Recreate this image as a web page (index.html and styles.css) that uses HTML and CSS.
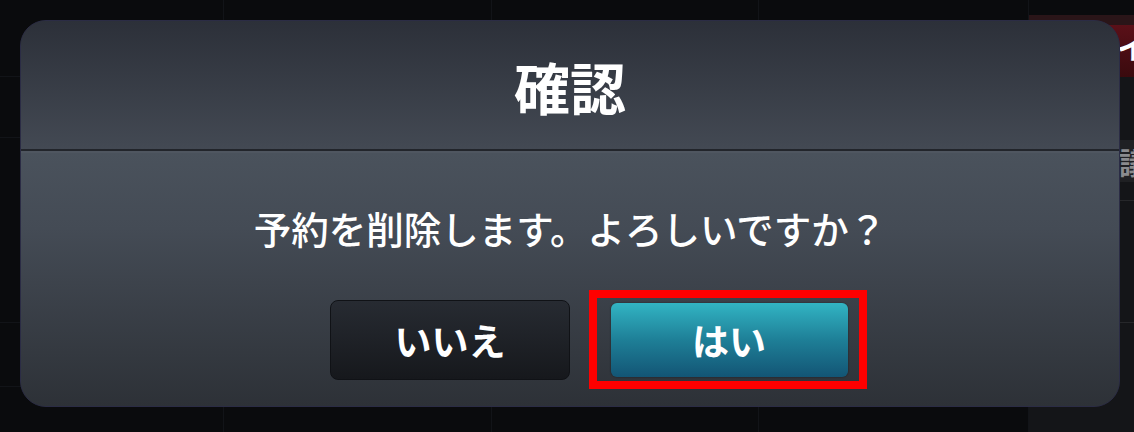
FILE: index.html
```html
<!DOCTYPE html>
<html lang="ja">
<head>
<meta charset="UTF-8">
<meta name="viewport" content="width=device-width, initial-scale=1.0">
<title>確認</title>
<link rel="stylesheet" href="styles.css">
</head>
<body>
    <div class="screen">
        <!-- 뒤에 깔린 화면 -->
        <div class="backdrop">
            <div class="board"></div>
            <div class="side">
                <div class="side-top"></div>
                <div class="side-head">イ</div>
                <div class="side-gap"></div>
                <div class="side-label">議</div>
                <div class="side-rest"></div>
            </div>
        </div>

        <!-- 확인 다이얼로그 -->
        <div class="dialog">
            <div class="dialog-head">
                <h1 class="dialog-title">確認</h1>
            </div>
            <div class="dialog-body">
                <p class="dialog-msg">予約を削除します。よろしいですか？</p>
                <div class="dialog-btns">
                    <button class="btn btn-no">いいえ</button>
                    <div class="focus">
                        <button class="btn btn-yes">はい</button>
                    </div>
                </div>
            </div>
        </div>
    </div>
</body>
</html>
```

FILE: styles.css
```css
*{
    box-sizing: border-box;
}
body{
    margin:0;
    background:#0a0b0d;
    font-family: "Noto Sans CJK JP", "Noto Sans", sans-serif;
}
.screen{
    position: relative;
    width:1134px;
    height:432px;
    overflow: hidden;
}
.backdrop{
    display: flex;
    height:100%;
}
.board{
    flex:1;
    background:
        linear-gradient(#121418,#121418) 223px 0/1px 100% no-repeat,
        linear-gradient(#121418,#121418) 491px 0/1px 100% no-repeat,
        linear-gradient(#121418,#121418) 758px 0/1px 100% no-repeat,
        linear-gradient(#121418,#121418) 0 76px/100% 1px no-repeat,
        linear-gradient(#121418,#121418) 0 137px/100% 1px no-repeat,
        linear-gradient(#121418,#121418) 0 322px/100% 1px no-repeat,
        linear-gradient(#121418,#121418) 0 386px/100% 1px no-repeat,
        #0a0b0d;
}
.side{
    width:106px;
    display: flex;
    flex-direction: column;
    border-left:1px solid #121418;
    overflow: hidden;
    white-space: nowrap;
}
.side-top{
    height:15px;
}
.side-head{
    height:62px;
    padding:10px 0 0 88px;
    background: linear-gradient(#2a1518 0, #2a1518 10px, #5a1018 10px, #3a0a0e);
    color:#fff;
    font-size:30px;
    font-weight: bold;
    line-height:42px;
}
.side-gap{
    height:63px;
    background:#141518;
}
.side-label{
    height:42px;
    padding-left:90px;
    background:#1f2023;
    color:#8a8b8e;
    font-size:30px;
    font-weight: bold;
    line-height:42px;
}
.side-rest{
    flex:1;
    background:
        linear-gradient(#26272a,#26272a) 0 18px/100% 1px no-repeat,
        linear-gradient(#26272a,#26272a) 0 140px/100% 1px no-repeat,
        #141518;
}

.dialog{
    position: absolute;
    top:20px;
    left:20px;
    width:1100px;
    height:387px;
    border:1px solid #2b2c45;
    border-radius:26px;
    overflow: hidden;
    display: flex;
    flex-direction: column;
    background:#2e3238;
}
.dialog-head{
    height:130px;
    display: flex;
    align-items: center;
    justify-content: center;
    background: linear-gradient(#2c3039, #434953);
    border-bottom:2px solid #22252b;
}
.dialog-title{
    margin:0;
    color:#fff;
    font-size:56px;
    font-weight: bold;
    line-height:1;
    padding-top:2px;
}
.dialog-body{
    flex:1;
    border-top:2px solid #4f5660;
    background: linear-gradient(#4a525c, #444b55 30%, #2d3137);
    display: flex;
    flex-direction: column;
    align-items: center;
}
.dialog-msg{
    margin:52px 0 0 0;
    color:#fff;
    font-size:37.5px;
    font-weight: 500;
    line-height:46px;
}
.dialog-btns{
    align-self: stretch;
    display: flex;
    align-items: center;
    gap:19px;
    padding-left:309px;
    margin-top:39px;
}
.btn{
    border-radius:8px;
    color:#fff;
    font-family: inherit;
    font-size:37px;
    font-weight: bold;
    padding:0;
}
.btn-no{
    width:240px;
    height:80px;
    border:1px solid #101216;
    background: linear-gradient(#272b32, #16181c);
}
.focus{
    width:278px;
    height:99px;
    border:8px solid #ff0000;
    display: flex;
    align-items: center;
    justify-content: center;
    padding:0 0 0 2px;
}
.btn-yes{
    width:237px;
    height:74px;
    border:none;
    border-radius:6px;
    background: linear-gradient(#32b4c3, #1e7f97 50%, #135575);
    box-shadow: 0 0 2px rgba(0,0,0,0.5);
}
```
